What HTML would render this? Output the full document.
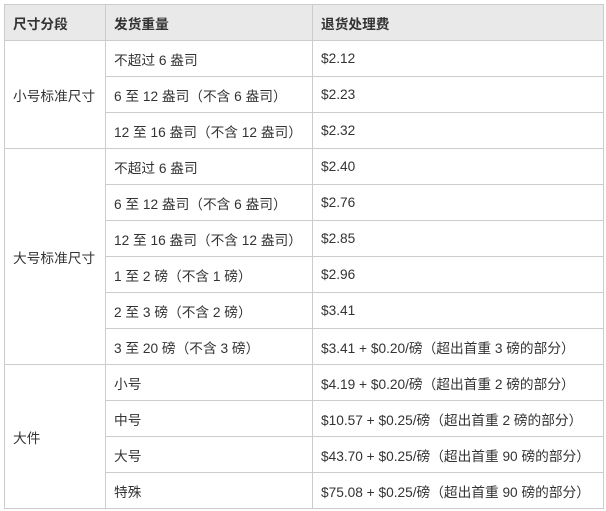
<!DOCTYPE html>
<html><head><meta charset="utf-8"><style>
body{margin:0;background:#fff;}
table{position:absolute;left:4px;top:4px;border-collapse:collapse;font-family:"Liberation Sans","Noto Sans CJK SC",sans-serif;font-size:13.7px;color:#333;}
td,th{border:1px solid #ccc;height:36px;padding:0 0 0 8px;text-align:left;vertical-align:middle;box-sizing:border-box;white-space:nowrap;}
th{background:#e9e9e9;font-weight:bold;height:36px;}
col.a{width:101px}col.b{width:207px}col.c{width:291px}
</style></head><body>
<table>
<colgroup><col class="a"><col class="b"><col class="c"></colgroup>
<tr><th>尺寸分段</th><th>发货重量</th><th>退货处理费</th></tr>
<tr><td rowspan="3">小号标准尺寸</td><td>不超过 6 盎司</td><td>$2.12</td></tr>
<tr><td>6 至 12 盎司（不含 6 盎司）</td><td>$2.23</td></tr>
<tr><td>12 至 16 盎司（不含 12 盎司）</td><td>$2.32</td></tr>
<tr><td rowspan="6">大号标准尺寸</td><td>不超过 6 盎司</td><td>$2.40</td></tr>
<tr><td>6 至 12 盎司（不含 6 盎司）</td><td>$2.76</td></tr>
<tr><td>12 至 16 盎司（不含 12 盎司）</td><td>$2.85</td></tr>
<tr><td>1 至 2 磅（不含 1 磅）</td><td>$2.96</td></tr>
<tr><td>2 至 3 磅（不含 2 磅）</td><td>$3.41</td></tr>
<tr><td>3 至 20 磅（不含 3 磅）</td><td>$3.41 + $0.20/磅（超出首重 3 磅的部分）</td></tr>
<tr><td rowspan="4">大件</td><td>小号</td><td>$4.19 + $0.20/磅（超出首重 2 磅的部分）</td></tr>
<tr><td>中号</td><td>$10.57 + $0.25/磅（超出首重 2 磅的部分）</td></tr>
<tr><td>大号</td><td>$43.70 + $0.25/磅（超出首重 90 磅的部分）</td></tr>
<tr><td>特殊</td><td>$75.08 + $0.25/磅（超出首重 90 磅的部分）</td></tr>
</table>
</body></html>
